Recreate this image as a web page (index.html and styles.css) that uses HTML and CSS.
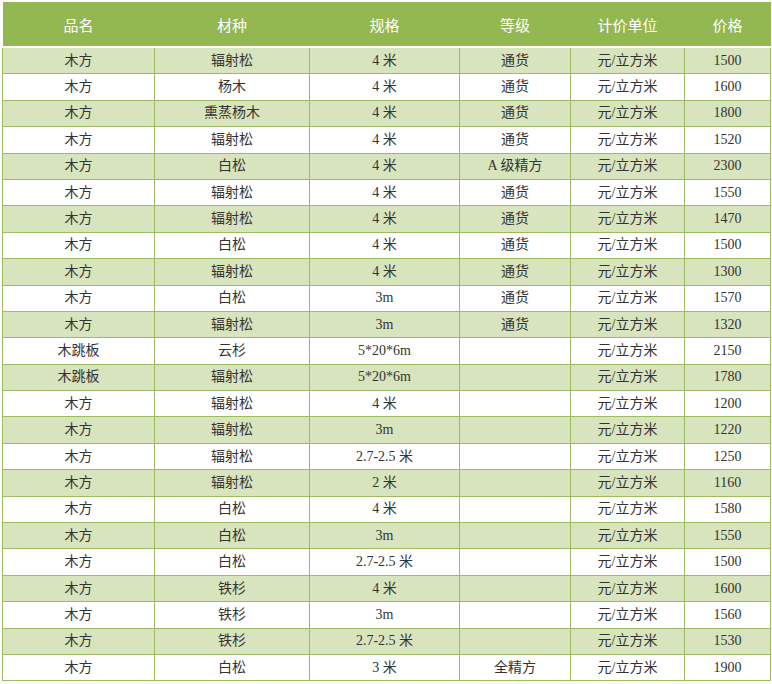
FILE: index.html
```html
<!DOCTYPE html>
<html lang="zh-CN">
<head>
<meta charset="utf-8">
<title>木方价格表</title>
<link rel="stylesheet" href="styles.css">
</head>
<body>
<table class="price-table">
  <colgroup>
    <col class="c1"><col class="c2"><col class="c3"><col class="c4"><col class="c5"><col class="c6">
  </colgroup>
  <thead>
    <tr><th>品名</th><th>材种</th><th>规格</th><th>等级</th><th>计价单位</th><th>价格</th></tr>
  </thead>
  <tbody>
    <tr><td>木方</td><td>辐射松</td><td>4 米</td><td>通货</td><td>元/立方米</td><td>1500</td></tr>
    <tr><td>木方</td><td>杨木</td><td>4 米</td><td>通货</td><td>元/立方米</td><td>1600</td></tr>
    <tr><td>木方</td><td>熏蒸杨木</td><td>4 米</td><td>通货</td><td>元/立方米</td><td>1800</td></tr>
    <tr><td>木方</td><td>辐射松</td><td>4 米</td><td>通货</td><td>元/立方米</td><td>1520</td></tr>
    <tr><td>木方</td><td>白松</td><td>4 米</td><td>A 级精方</td><td>元/立方米</td><td>2300</td></tr>
    <tr><td>木方</td><td>辐射松</td><td>4 米</td><td>通货</td><td>元/立方米</td><td>1550</td></tr>
    <tr><td>木方</td><td>辐射松</td><td>4 米</td><td>通货</td><td>元/立方米</td><td>1470</td></tr>
    <tr><td>木方</td><td>白松</td><td>4 米</td><td>通货</td><td>元/立方米</td><td>1500</td></tr>
    <tr><td>木方</td><td>辐射松</td><td>4 米</td><td>通货</td><td>元/立方米</td><td>1300</td></tr>
    <tr><td>木方</td><td>白松</td><td>3m</td><td>通货</td><td>元/立方米</td><td>1570</td></tr>
    <tr><td>木方</td><td>辐射松</td><td>3m</td><td>通货</td><td>元/立方米</td><td>1320</td></tr>
    <tr><td>木跳板</td><td>云杉</td><td>5*20*6m</td><td></td><td>元/立方米</td><td>2150</td></tr>
    <tr><td>木跳板</td><td>辐射松</td><td>5*20*6m</td><td></td><td>元/立方米</td><td>1780</td></tr>
    <tr><td>木方</td><td>辐射松</td><td>4 米</td><td></td><td>元/立方米</td><td>1200</td></tr>
    <tr><td>木方</td><td>辐射松</td><td>3m</td><td></td><td>元/立方米</td><td>1220</td></tr>
    <tr><td>木方</td><td>辐射松</td><td>2.7-2.5 米</td><td></td><td>元/立方米</td><td>1250</td></tr>
    <tr><td>木方</td><td>辐射松</td><td>2 米</td><td></td><td>元/立方米</td><td>1160</td></tr>
    <tr><td>木方</td><td>白松</td><td>4 米</td><td></td><td>元/立方米</td><td>1580</td></tr>
    <tr><td>木方</td><td>白松</td><td>3m</td><td></td><td>元/立方米</td><td>1550</td></tr>
    <tr><td>木方</td><td>白松</td><td>2.7-2.5 米</td><td></td><td>元/立方米</td><td>1500</td></tr>
    <tr><td>木方</td><td>铁杉</td><td>4 米</td><td></td><td>元/立方米</td><td>1600</td></tr>
    <tr><td>木方</td><td>铁杉</td><td>3m</td><td></td><td>元/立方米</td><td>1560</td></tr>
    <tr><td>木方</td><td>铁杉</td><td>2.7-2.5 米</td><td></td><td>元/立方米</td><td>1530</td></tr>
    <tr><td>木方</td><td>白松</td><td>3 米</td><td>全精方</td><td>元/立方米</td><td>1900</td></tr>
  </tbody>
</table>
</body>
</html>
```
FILE: styles.css
```css
html, body {
  margin: 0;
  padding: 0;
  background: #ffffff;
}
body {
  padding: 2px 2px 0 2px;
}
.price-table {
  width: 768px;
  border-collapse: collapse;
  table-layout: fixed;
  font-family: "Liberation Serif", "Noto Sans CJK SC", serif;
  font-size: 14px;
  color: #333333;
}
.c1 { width: 152px; }
.c2 { width: 155px; }
.c3 { width: 150px; }
.c4 { width: 111px; }
.c5 { width: 114px; }
.c6 { width: 86px; }
.price-table thead th {
  background: #93b751;
  color: #ffffff;
  font-family: "Noto Sans CJK SC", sans-serif;
  font-weight: normal;
  font-size: 15px;
  height: 44px;
  padding: 0;
  border-bottom: 2px solid #ffffff;
  text-align: center;
  vertical-align: middle;
}
.price-table tbody td {
  height: 25.4px;
  padding: 0;
  text-align: center;
  vertical-align: middle;
  border: 1px solid #9dbb62;
  line-height: 1;
}
.price-table tbody tr:nth-child(odd) td {
  background: #d8e4bd;
}
.price-table tbody tr:nth-child(even) td {
  background: #ffffff;
}
```
